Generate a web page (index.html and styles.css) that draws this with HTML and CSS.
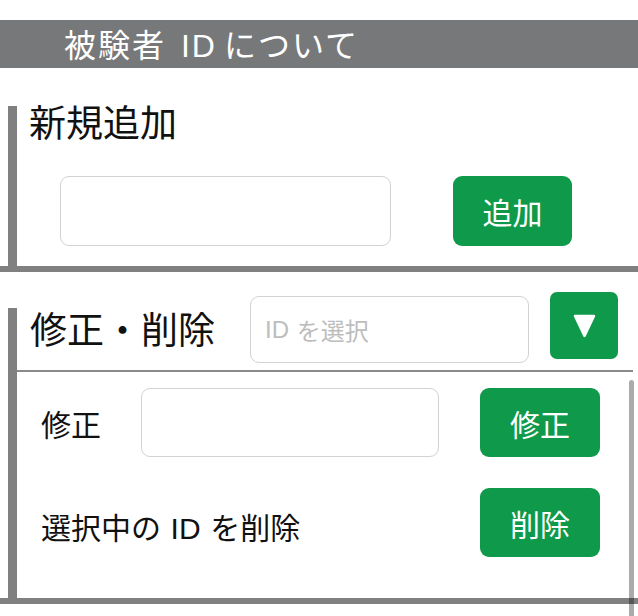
FILE: index.html
```html
<!DOCTYPE html>
<html lang="ja">
<head>
<meta charset="utf-8">
<title>被験者 IDについて</title>
<link rel="stylesheet" href="styles.css">
</head>
<body>
<div class="page">
  <div class="page-title">被験者 <span class="latin">ID</span>について</div>

  <section class="section section-add">
    <h2 class="section-title">新規追加</h2>
    <div class="add-row">
      <input class="text-input add-input" type="text">
      <button class="btn btn-add">追加</button>
    </div>
  </section>

  <div class="divider"></div>

  <section class="section section-edit">
    <div class="edit-head">
      <h2 class="section-title edit-title">修正・削除</h2>
      <div class="select-box"><span class="latin latin-first">ID</span>を選択</div>
      <button class="btn btn-drop" aria-label="開く">
        <svg width="23" height="24" viewBox="0 0 23 24"><polygon points="2,2 21,2 11.5,22" fill="#fff" stroke="#fff" stroke-width="2.5" stroke-linejoin="round"/></svg>
      </button>
    </div>
    <div class="edit-body">
      <div class="edit-grid">
        <div class="row-label">修正</div>
        <input class="text-input edit-input" type="text">
        <button class="btn btn-row">修正</button>
        <div class="row-label row-label-wide">選択中の<span class="latin">ID</span>を削除</div>
        <button class="btn btn-row">削除</button>
      </div>
      <div class="scroll-thumb"></div>
    </div>
  </section>

  <div class="divider"></div>
</div>
</body>
</html>
```

FILE: styles.css
```css
html, body {
  margin: 0;
  padding: 0;
  background: #fff;
  overflow: hidden;
}

body {
  font-family: "Noto Sans CJK JP", "Noto Sans", sans-serif;
  color: #111;
}

.page {
  width: 638px;
  height: 616px;
  padding-top: 20px;
  box-sizing: border-box;
}

.latin {
  font-family: "Liberation Sans", "Noto Sans CJK JP", sans-serif;
  margin: 0 0.32em;
}

.latin-first {
  margin-left: 0;
}

.page-title {
  height: 48px;
  line-height: 46px;
  background: #77787a;
  color: #fff;
  font-size: 32px;
  letter-spacing: 2px;
  padding-left: 64px;
  white-space: nowrap;
}

.page-title .latin {
  margin: 0 0.22em 0 0.18em;
}

.section {
  margin-left: 8px;
  border-left: 9px solid #808080;
}

.section-title {
  margin: 0;
  font-weight: normal;
  font-size: 37px;
  line-height: 30px;
  white-space: nowrap;
}

.section-add {
  margin-top: 38px;
  padding-bottom: 20px;
}

.section-add .section-title {
  padding-left: 12px;
}

.add-row {
  display: flex;
  margin-top: 40px;
  padding-left: 43px;
}

.text-input {
  box-sizing: border-box;
  border: 1px solid #d2d2d2;
  border-radius: 9px;
  background: #fff;
  margin: 0;
  padding: 0;
  outline: none;
}

.add-input {
  width: 331px;
  height: 70px;
}

.btn {
  border: none;
  margin: 0;
  padding: 0;
  background: #0e9a4a;
  color: #fff;
  font-family: "Noto Sans CJK JP", "Noto Sans", sans-serif;
  font-size: 30px;
  border-radius: 9px;
  display: flex;
  align-items: center;
  justify-content: center;
}

.btn-add {
  margin-left: 62px;
  width: 119px;
  height: 70px;
}

.divider {
  height: 6px;
  background: #808080;
}

.section-edit {
  margin-top: 36px;
  margin-right: 5px;
}

.edit-head {
  display: flex;
  align-items: flex-start;
  height: 62px;
  border-bottom: 2px solid #8a8a8a;
}

.edit-title {
  padding-top: 4px;
  padding-left: 13px;
  line-height: 32px;
}

.select-box {
  box-sizing: border-box;
  margin-left: 35px;
  margin-top: -12px;
  width: 279px;
  height: 67px;
  border: 1px solid #d2d2d2;
  border-radius: 9px;
  padding-left: 14px;
  display: flex;
  align-items: center;
  font-size: 24px;
  color: #bdbdbd;
  white-space: nowrap;
}

.btn-drop {
  margin-left: 21px;
  margin-top: -16px;
  width: 68px;
  height: 67px;
  border-radius: 7px;
}

.btn-drop svg {
  display: block;
  margin-top: 1px;
}

.edit-body {
  position: relative;
  padding: 16px 0 41px 24px;
}

.edit-grid {
  display: grid;
  grid-template-columns: 100px 298px 161px;
  grid-auto-rows: 69px;
  row-gap: 31px;
  align-items: center;
}

.edit-grid .btn-row {
  grid-column: 3;
  margin-left: 41px;
  width: 120px;
  height: 69px;
}

.edit-input {
  width: 298px;
  height: 69px;
}

.row-label {
  font-size: 30px;
  line-height: 36px;
  white-space: nowrap;
}

.row-label-wide {
  grid-column: 1 / 3;
  padding-top: 10px;
}

.scroll-thumb {
  position: absolute;
  right: -1px;
  top: 8px;
  width: 5px;
  height: 250px;
  border-radius: 3px;
  background: rgba(0, 0, 0, 0.33);
}
```
